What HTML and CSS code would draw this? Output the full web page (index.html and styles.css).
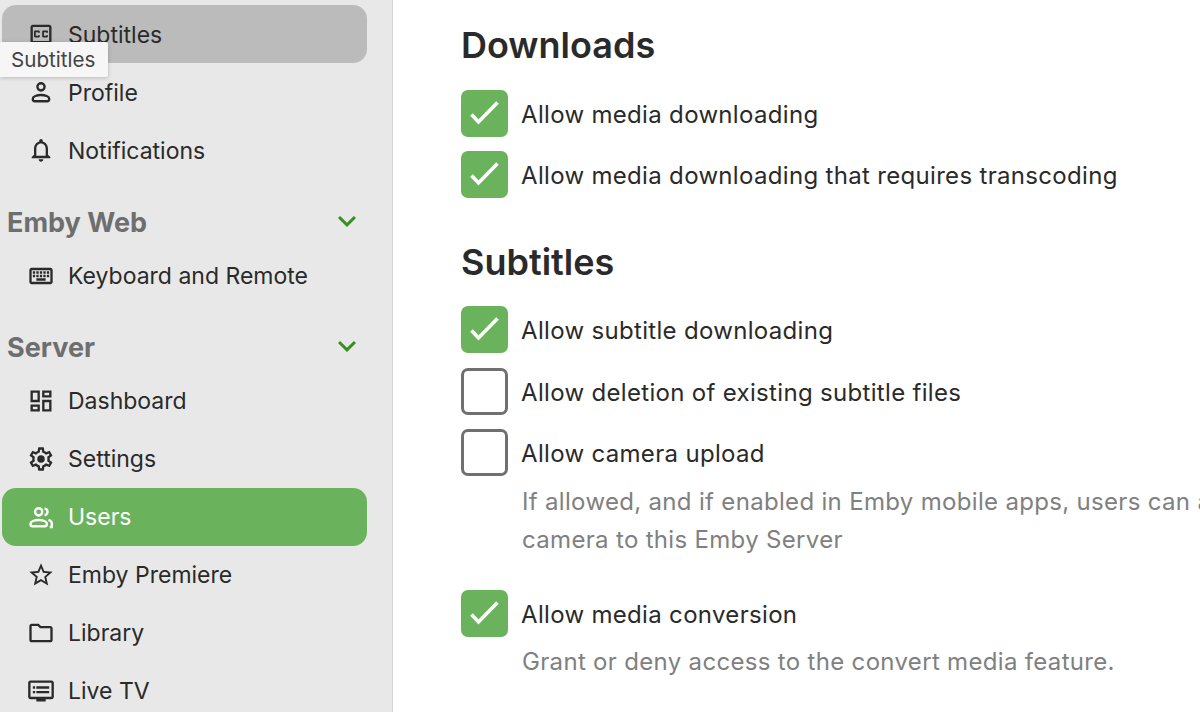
FILE: index.html
```html
<!DOCTYPE html>
<html lang="en">
<head>
    <meta charset="UTF-8">
    <title>Emby - User settings</title>
    <link rel="stylesheet" href="styles.css">
</head>
<body>
    <div class="app">
        <nav class="sidebar">
            <a class="nav-item nav-item-hover">
                <svg class="nav-icon" viewBox="0 0 24 24"><path d="M19 4H5c-1.11 0-2 .9-2 2v12c0 1.1.89 2 2 2h14c1.1 0 2-.9 2-2V6c0-1.1-.9-2-2-2zm0 14H5V6h14v12zM7 15h3c.55 0 1-.45 1-1v-1H9.5v.5h-2v-3h2v.5H11v-1c0-.55-.45-1-1-1H7c-.55 0-1 .45-1 1v4c0 .55.45 1 1 1zm7 0h3c.55 0 1-.45 1-1v-1h-1.5v.5h-2v-3h2v.5H18v-1c0-.55-.45-1-1-1h-3c-.55 0-1 .45-1 1v4c0 .55.45 1 1 1z"/></svg>
                <span class="nav-label">Subtitles</span>
            </a>
            <a class="nav-item">
                <svg class="nav-icon nav-icon-line" viewBox="0 0 24 24"><circle cx="12" cy="7.6" r="3.1"/><path d="M12 14.6c-3.6 0-7 1.2-7 2.9v.7c0 1 .7 1.7 1.7 1.7h10.6c1 0 1.7-.7 1.7-1.7v-.7c0-1.7-3.4-2.9-7-2.9z"/></svg>
                <span class="nav-label">Profile</span>
            </a>
            <a class="nav-item">
                <svg class="nav-icon" viewBox="0 0 24 24"><path d="M12 22c1.1 0 2-.9 2-2h-4c0 1.1.9 2 2 2zm6-6v-5c0-3.07-1.63-5.64-4.5-6.32V4c0-.83-.67-1.5-1.5-1.5s-1.5.67-1.5 1.5v.68C7.64 5.36 6 7.92 6 11v5l-2 2v1h16v-1l-2-2zm-2 1H8v-6c0-2.48 1.51-4.5 4-4.5s4 2.02 4 4.5v6z"/></svg>
                <span class="nav-label">Notifications</span>
            </a>

            <div class="nav-heading">
                <span>Emby Web</span>
                <svg class="nav-chevron" viewBox="0 0 24 24"><path d="M16.59 8.59L12 13.17 7.41 8.59 6 10l6 6 6-6z"/></svg>
            </div>
            <a class="nav-item">
                <svg class="nav-icon" viewBox="0 0 24 24"><path d="M20 7v10H4V7h16m0-2H4c-1.1 0-1.99.9-1.99 2L2 17c0 1.1.9 2 2 2h16c1.1 0 2-.9 2-2V7c0-1.1-.9-2-2-2zm-9 3h2v2h-2zm0 3h2v2h-2zM8 8h2v2H8zm0 3h2v2H8zm-3 0h2v2H5zm0-3h2v2H5zm3 6h8v2H8zm6-3h2v2h-2zm0-3h2v2h-2zm3 3h2v2h-2zm0-3h2v2h-2z"/></svg>
                <span class="nav-label">Keyboard and Remote</span>
            </a>

            <div class="nav-heading">
                <span>Server</span>
                <svg class="nav-chevron" viewBox="0 0 24 24"><path d="M16.59 8.59L12 13.17 7.41 8.59 6 10l6 6 6-6z"/></svg>
            </div>
            <a class="nav-item">
                <svg class="nav-icon" viewBox="0 0 24 24"><path d="M19 5v2h-4V5h4M9 5v6H5V5h4m10 8v6h-4v-6h4M9 17v2H5v-2h4M21 3h-8v6h8V3zM11 3H3v10h8V3zm10 8h-8v10h8V11zm-10 4H3v6h8v-6z"/></svg>
                <span class="nav-label">Dashboard</span>
            </a>
            <a class="nav-item">
                <svg class="nav-icon" viewBox="0 0 24 24"><path d="M19.43 12.98c.04-.32.07-.64.07-.98 0-.34-.03-.66-.07-.98l2.11-1.65c.19-.15.24-.42.12-.64l-2-3.46c-.09-.16-.26-.25-.44-.25-.06 0-.12.01-.17.03l-2.49 1c-.52-.4-1.08-.73-1.69-.98l-.38-2.65C14.46 2.18 14.25 2 14 2h-4c-.25 0-.46.18-.49.42l-.38 2.65c-.61.25-1.17.59-1.69.98l-2.49-1c-.06-.02-.12-.03-.18-.03-.17 0-.34.09-.43.25l-2 3.46c-.13.22-.07.49.12.64l2.11 1.65c-.04.32-.07.65-.07.98 0 .33.03.66.07.98l-2.11 1.65c-.19.15-.24.42-.12.64l2 3.46c.09.16.26.25.44.25.06 0 .12-.01.17-.03l2.49-1c.52.4 1.08.73 1.69.98l.38 2.65c.03.24.24.42.49.42h4c.25 0 .46-.18.49-.42l.38-2.65c.61-.25 1.17-.59 1.69-.98l2.49 1c.06.02.12.03.18.03.17 0 .34-.09.43-.25l2-3.46c.12-.22.07-.49-.12-.64l-2.11-1.65zm-1.98-1.71c.04.31.05.52.05.73 0 .21-.02.43-.05.73l-.14 1.13.89.7 1.08.84-.7 1.21-1.27-.51-1.04-.42-.9.68c-.43.32-.84.56-1.25.73l-1.06.43-.16 1.13-.2 1.35h-1.4l-.19-1.35-.16-1.13-1.06-.43c-.43-.18-.83-.41-1.23-.71l-.91-.7-1.06.43-1.27.51-.7-1.21 1.08-.84.89-.7-.14-1.13c-.03-.31-.05-.54-.05-.74s.02-.43.05-.73l.14-1.13-.89-.7-1.08-.84.7-1.21 1.27.51 1.04.42.9-.68c.43-.32.84-.56 1.25-.73l1.06-.43.16-1.13.2-1.35h1.39l.19 1.35.16 1.13 1.06.43c.43.18.83.41 1.23.71l.91.7 1.06-.43 1.27-.51.7 1.21-1.07.85-.89.7.14 1.13z"/><circle cx="12" cy="12" r="3.2"/></svg>
                <span class="nav-label">Settings</span>
            </a>
            <a class="nav-item nav-item-active">
                <svg class="nav-icon nav-icon-line" viewBox="0 0 24 24"><circle cx="10" cy="7.6" r="3.1"/><path d="M10 14.6c-3.6 0-7 1.2-7 2.9v.7c0 1 .7 1.7 1.7 1.7h10.6c1 0 1.7-.7 1.7-1.7v-.7c0-1.7-3.4-2.9-7-2.9z"/><path d="M15 4.6c1.6.3 2.6 1.5 2.6 3s-1 2.7-2.6 3"/><path d="M18.4 14.4c1.6.6 2.9 1.6 2.9 3v3.2h-1.8"/></svg>
                <span class="nav-label">Users</span>
            </a>
            <a class="nav-item">
                <svg class="nav-icon" viewBox="0 0 24 24"><path d="M22 9.24l-7.19-.62L12 2 9.19 8.63 2 9.24l5.46 4.73L5.82 21 12 17.27 18.18 21l-1.63-7.03L22 9.24zM12 15.4l-3.76 2.27 1-4.28-3.32-2.88 4.38-.38L12 6.1l1.71 4.04 4.38.38-3.32 2.88 1 4.28L12 15.4z"/></svg>
                <span class="nav-label">Emby Premiere</span>
            </a>
            <a class="nav-item">
                <svg class="nav-icon" viewBox="0 0 24 24"><path d="M9.17 6l2 2H20v10H4V6h5.17M10 4H4c-1.1 0-1.99.9-1.99 2L2 18c0 1.1.9 2 2 2h16c1.1 0 2-.9 2-2V8c0-1.1-.9-2-2-2h-8l-2-2z"/></svg>
                <span class="nav-label">Library</span>
            </a>
            <a class="nav-item">
                <svg class="nav-icon" viewBox="0 0 24 24"><path d="M21 3H3c-1.1 0-2 .9-2 2v12c0 1.1.9 2 2 2h5v2h8v-2h5c1.1 0 2-.9 2-2V5c0-1.1-.9-2-2-2zm0 14H3V5h18v12zm-2-9H8v2h11V8zm0 4H8v2h11v-2zM7 8H5v2h2V8zm0 4H5v2h2v-2z"/></svg>
                <span class="nav-label">Live TV</span>
            </a>
            <div class="tooltip">Subtitles</div>
        </nav>

        <main class="content">
            <h2 class="section-title">Downloads</h2>
            <label class="check-row">
                <span class="checkbox checkbox-on"><svg viewBox="0 0 47 47"><path d="M10.5 24.5l7 7.5L36.5 12.5"/></svg></span>
                <span class="check-label">Allow media downloading</span>
            </label>
            <label class="check-row">
                <span class="checkbox checkbox-on"><svg viewBox="0 0 47 47"><path d="M10.5 24.5l7 7.5L36.5 12.5"/></svg></span>
                <span class="check-label">Allow media downloading that requires transcoding</span>
            </label>

            <h2 class="section-title section-title-next">Subtitles</h2>
            <label class="check-row">
                <span class="checkbox checkbox-on"><svg viewBox="0 0 47 47"><path d="M10.5 24.5l7 7.5L36.5 12.5"/></svg></span>
                <span class="check-label">Allow subtitle downloading</span>
            </label>
            <label class="check-row">
                <span class="checkbox"></span>
                <span class="check-label">Allow deletion of existing subtitle files</span>
            </label>
            <label class="check-row">
                <span class="checkbox"></span>
                <span class="check-label">Allow camera upload</span>
            </label>
            <p class="check-help">If allowed, and if enabled in Emby mobile apps, users can automatically upload photos from their<br>camera to this Emby Server</p>
            <label class="check-row check-row-spaced">
                <span class="checkbox checkbox-on"><svg viewBox="0 0 47 47"><path d="M10.5 24.5l7 7.5L36.5 12.5"/></svg></span>
                <span class="check-label">Allow media conversion</span>
            </label>
            <p class="check-help">Grant or deny access to the convert media feature.</p>
        </main>
    </div>
</body>
</html>
```

FILE: styles.css
```css
:root {
    --green: #6bb25c;
    --text-color: #2a2a2a;
    --muted-color: #808080;
    --sidebar-bg: #e8e8e8;
}

* {
    margin: 0;
    padding: 0;
    box-sizing: border-box;
}

body {
    font-family: Inter, "Noto Sans", sans-serif;
    color: var(--text-color);
    background: #fff;
    height: 712px;
    overflow: hidden;
}

.app {
    display: flex;
    height: 712px;
}

.sidebar {
    position: relative;
    flex: 0 0 393px;
    padding: 5.4px 25px 0 2px;
    background: var(--sidebar-bg);
    border-right: 1px solid #d6d6d6;
    overflow: hidden;
}

.nav-item {
    display: flex;
    align-items: center;
    gap: 13.5px;
    height: 58px;
    padding-left: 24.5px;
    border-radius: 14px;
    font-size: 23px;
    white-space: nowrap;
}

.nav-label {
    margin-top: 1.2px;
}

.nav-item-hover {
    background: #bbb;
}

.nav-item-active {
    background: var(--green);
    color: #fff;
}

.nav-icon {
    flex: none;
    width: 28px;
    height: 28px;
    fill: currentColor;
}

.nav-icon-line {
    fill: none;
    stroke: currentColor;
    stroke-width: 2;
}

.nav-heading {
    display: flex;
    align-items: center;
    justify-content: space-between;
    height: 67.2px;
    padding: 19px 0 0 5px;
    font-size: 27px;
    font-weight: 700;
    color: #6e6e6e;
}

.nav-chevron {
    width: 36px;
    height: 36px;
    margin-right: 2px;
    margin-top: -3px;
    fill: #36901f;
}

.tooltip {
    position: absolute;
    top: 42px;
    left: 0;
    padding: 0 13px 0 11px;
    height: 35px;
    line-height: 35px;
    font-size: 20.6px;
    color: #444;
    background: #f6f6f6;
    border-radius: 0 2px 2px 0;
    box-shadow: 0 1px 4px rgba(0, 0, 0, 0.2);
}

.content {
    flex: 1;
    min-width: 0;
    padding: 19.8px 0 0 68px;
    overflow: hidden;
}

.section-title {
    font-size: 36px;
    font-weight: 600;
    line-height: 50px;
    margin-bottom: 20px;
}

.section-title-next {
    margin-top: 39px;
    margin-bottom: 19px;
}

.check-row {
    display: flex;
    align-items: center;
    gap: 13px;
    height: 47px;
    margin-bottom: 14.5px;
    font-size: 24px;
    letter-spacing: 0.32px;
    white-space: nowrap;
}

.check-label {
    margin-top: 2px;
}

.check-row-spaced {
    margin-top: 31px;
}

.checkbox {
    flex: none;
    width: 47px;
    height: 47px;
    border: 3.5px solid #707070;
    border-radius: 7px;
}

.checkbox-on {
    border: none;
    background: var(--green);
}

.checkbox svg {
    display: block;
    width: 47px;
    height: 47px;
    fill: none;
    stroke: #fff;
    stroke-width: 3.6;
}

.check-help {
    margin: -8px 0 0 61px;
    font-size: 24px;
    letter-spacing: 0.32px;
    line-height: 38px;
    color: var(--muted-color);
    white-space: nowrap;
}
```
